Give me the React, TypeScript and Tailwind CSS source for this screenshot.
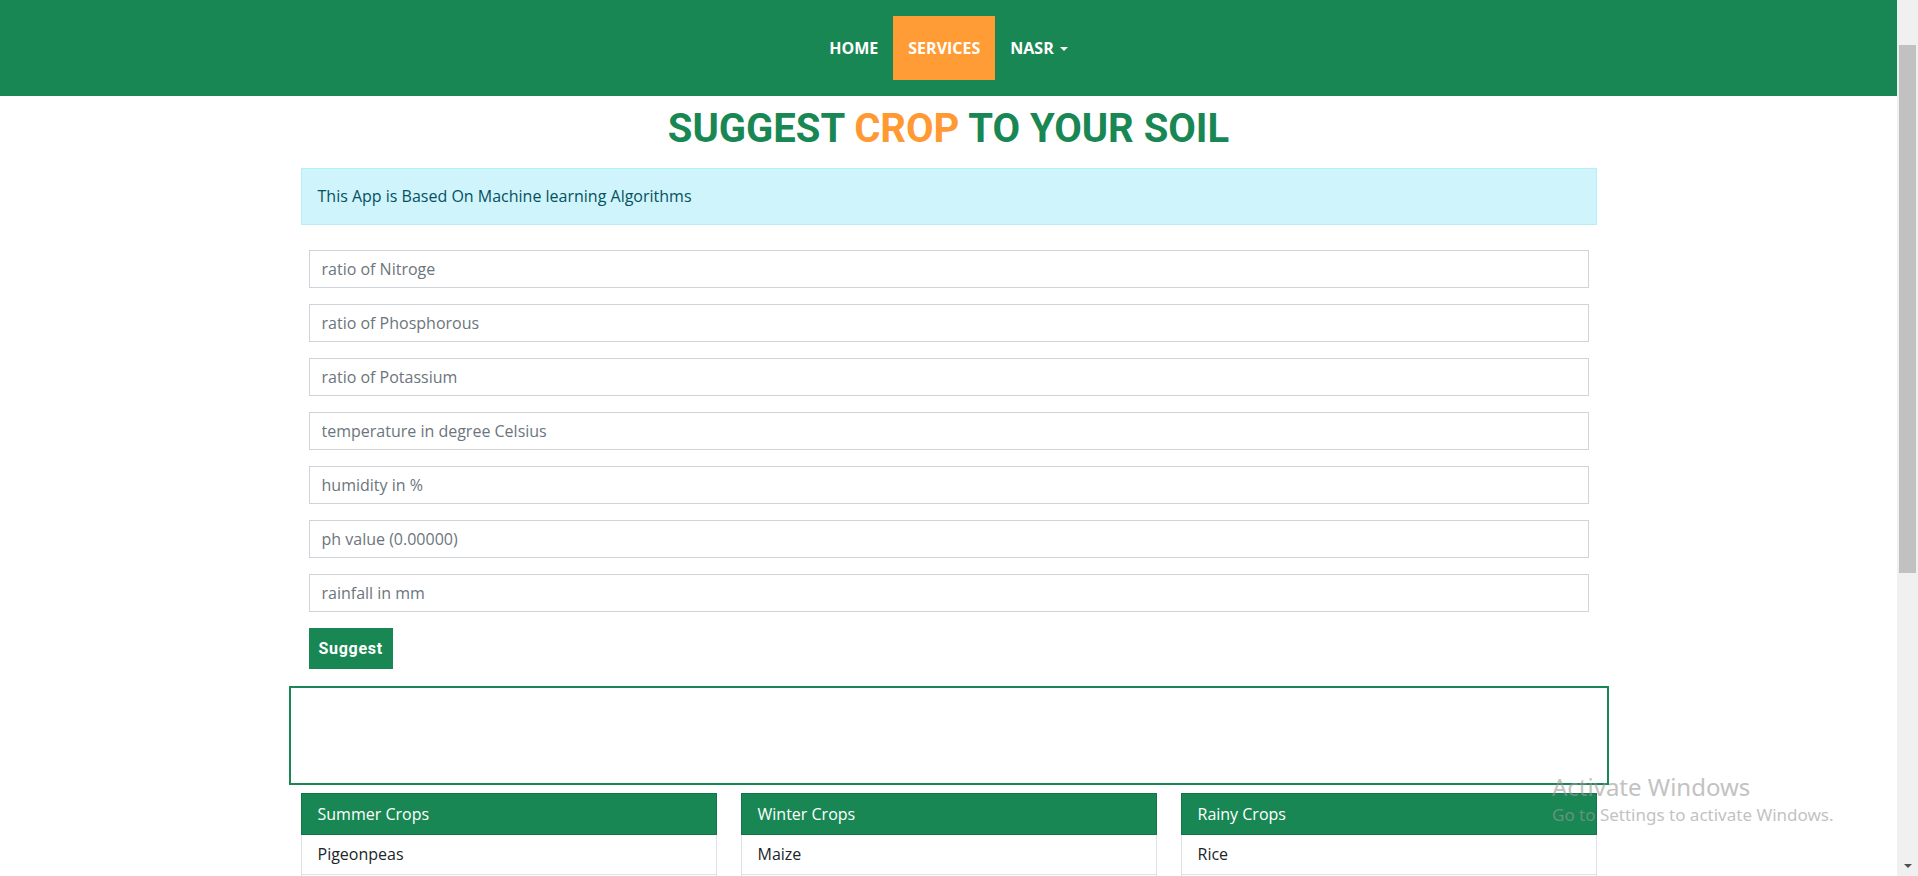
const fields = [
  "ratio of Nitroge",
  "ratio of Phosphorous",
  "ratio of Potassium",
  "temperature in degree Celsius",
  "humidity in %",
  "ph value (0.00000)",
  "rainfall in mm",
]

const seasons = [
  { title: "Summer Crops", first: "Pigeonpeas" },
  { title: "Winter Crops", first: "Maize" },
  { title: "Rainy Crops", first: "Rice" },
]

export default function App() {
  return (
    <div className="relative flex h-[876px] w-full overflow-hidden bg-white font-['Open_Sans',sans-serif]">
      <div className="min-w-0 flex-1">
        {/* Navbar */}
        <nav className="flex h-[96px] items-center justify-center bg-[#198754]">
          <ul className="flex h-[64px] items-stretch text-[16px] font-bold text-white">
            <li className="flex items-center px-[15px]">HOME</li>
            <li className="flex items-center bg-[#ff9c35] px-[15px]">SERVICES</li>
            <li className="flex items-center gap-[6px] px-[15px]">
              NASR
              <span className="mt-[2px] h-0 w-0 border-x-[4px] border-t-[4px] border-x-transparent border-t-white" />
            </li>
          </ul>
        </nav>

        <div className="mx-auto w-[1320px] px-3">
          <h1 className="mt-[9px] mb-[15px] text-center font-['Roboto',sans-serif] text-[40px] leading-[48px] font-bold text-[#198754]">
            SUGGEST <span className="text-[#ff9933]">CROP</span> TO YOUR SOIL
          </h1>

          <div className="mb-4 border border-[#b6effb] bg-[#cff4fc] px-4 py-4 text-[16px] leading-[23px] text-[#055160]">
            This App is Based On Machine learning Algorithms
          </div>

          <form className="px-2 pt-[9px]">
            {fields.map((f) => (
              <input
                key={f}
                type="text"
                placeholder={f}
                className="mb-4 block h-[38px] w-full border border-[#ced4da] bg-white px-3 text-[16px] text-[#212529] outline-none placeholder:text-[#6c757d]"
              />
            ))}
            <button
              type="button"
              className="h-[41px] bg-[#198754] px-[10px] font-['Roboto',sans-serif] text-[16px] font-bold tracking-[0.7px] text-white"
            >
              Suggest
            </button>
          </form>
        </div>

        {/* Result */}
        <div className="mx-auto mt-[17px] h-[99px] w-[1320px] border-2 border-[#198754]" />

        {/* Seasons */}
        <div className="mx-auto mt-[8px] w-[1320px] px-3">
          <div className="grid grid-cols-3 gap-6">
            {seasons.map((s) => (
              <div key={s.title} className="border border-[#dee2e6]">
                <div className="-m-px border border-[#157347] bg-[#198754] px-4 py-[8px] text-[16px] leading-6 text-white">
                  {s.title}
                </div>
                <div className="px-4 py-[8px] text-[16px] leading-6 text-[#212529]">{s.first}</div>
                <div className="border-t border-[#dee2e6] px-4 py-[8px] text-[16px] leading-6 text-[#212529]">&nbsp;</div>
              </div>
            ))}
          </div>
        </div>
      </div>

      {/* Scrollbar */}
      <div className="flex w-[21px] shrink-0 flex-col items-center bg-[#f0f0f0]">
        <div className="mt-[45px] h-[528px] w-[17px] bg-[#c1c1c1]" />
        <div className="flex-1" />
        <span className="mb-[8px] h-0 w-0 border-x-[4px] border-t-[4px] border-x-transparent border-t-[#505050]" />
      </div>

      {/* Windows watermark */}
      <div className="pointer-events-none absolute top-[771px] left-[1552px] font-['Noto_Sans',sans-serif] text-[#9a9a9a] opacity-60">
        <div className="text-[24px] leading-[32px]">Activate Windows</div>
        <div className="text-[17px] leading-[24px]">Go to Settings to activate Windows.</div>
      </div>
    </div>
  )
}
